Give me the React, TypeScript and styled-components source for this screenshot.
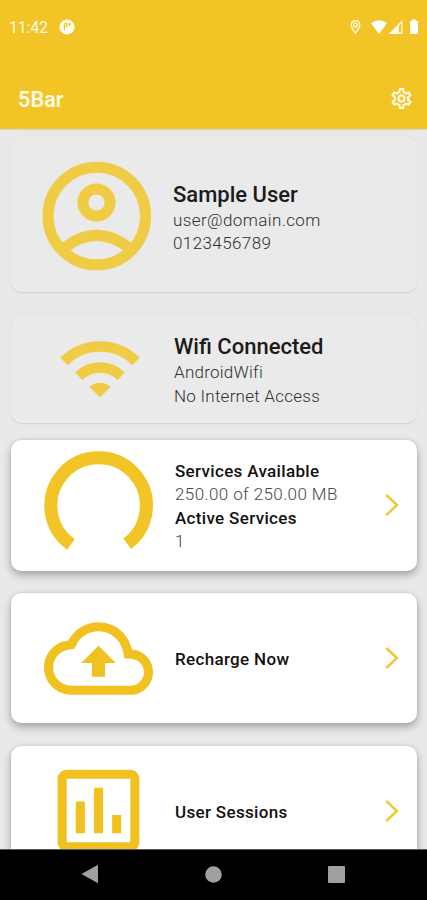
import React from "react";
import styled, { createGlobalStyle } from "styled-components";
import { MdOutlineSettings } from "react-icons/md";

const GlobalStyle = createGlobalStyle`
  *, *::before, *::after { box-sizing: border-box; }
  html, body { margin: 0; padding: 0; }
  body { font-family: Roboto, "Liberation Sans", sans-serif; overflow: hidden; }
  svg { display: block; }
`;

const YELLOW = "#f2c425";

const Screen = styled.div`
  display: flex;
  flex-direction: column;
  width: 427px;
  height: 900px;
  overflow: hidden;
  background: #e9e9e9;
`;

const Header = styled.header`
  flex: none;
  display: flex;
  flex-direction: column;
  height: 129px;
  background: ${YELLOW};
  color: #fffbe8;
  box-shadow: 0 0 2px rgba(80, 80, 60, 0.35);
  z-index: 1;
`;

const StatusBar = styled.div`
  display: flex;
  align-items: center;
  height: 54px;
  padding: 0 8px 0 9px;
`;

const Clock = styled.span`
  width: 50px;
  font-size: 16px;
  letter-spacing: -0.2px;
  line-height: 20px;
  padding-top: 2px;
`;

const StatusIcons = styled.div`
  margin-left: auto;
`;

const AppBar = styled.div`
  display: flex;
  align-items: center;
  justify-content: space-between;
  height: 75px;
  padding: 13px 13px 0 18px;
`;

const AppTitle = styled.h1`
  margin: 0;
  padding-top: 3px;
  font-size: 21.5px;
  line-height: 26px;
  font-weight: 600;
  letter-spacing: 0.1px;
`;

const Content = styled.main`
  flex: 1;
  min-height: 0;
  display: flex;
  flex-direction: column;
  padding: 7px 10.5px 0 11px;
  overflow: hidden;
`;

const Card = styled.section<{ $height: number; $gap?: number; $raised?: boolean; $inset?: number }>`
  flex: none;
  display: flex;
  align-items: center;
  height: ${(p) => p.$height}px;
  margin-bottom: ${(p) => p.$gap ?? 0}px;
  padding: 0 18px 0 ${(p) => p.$inset ?? 33}px;
  border-radius: 10px;
  background: ${(p) => (p.$raised ? "#fff" : "#eaeaea")};
  box-shadow: ${(p) =>
    p.$raised
      ? "0 4px 8px rgba(0,0,0,0.3), 0 0 3px rgba(0,0,0,0.1)"
      : "0 0.5px 1.5px rgba(0,0,0,0.1)"};
`;

const IconSlot = styled.div<{ $drop?: number; $trail?: number }>`
  flex: none;
  width: 110px;
  margin-right: ${(p) => p.$trail ?? 21}px;
  padding-top: ${(p) => p.$drop ?? 0}px;
`;

const Info = styled.div<{ $drop?: number }>`
  flex: 1;
  padding-top: ${(p) => p.$drop ?? 0}px;
  white-space: nowrap;
`;

const CardTitle = styled.h2`
  margin: 0;
  color: #1b1b1b;
  font-size: 22px;
  line-height: 28px;
  font-weight: 500;
`;

const Label = styled.div`
  color: #111;
  font-size: 17px;
  line-height: 23.4px;
  font-weight: 500;
  letter-spacing: 0.33px;
`;

const Value = styled.div<{ $tracking?: number; $dark?: boolean }>`
  color: ${(p) => (p.$dark ? "#303030" : "#484848")};
  font-size: 17px;
  line-height: 23.4px;
  font-weight: 300;
  letter-spacing: ${(p) => p.$tracking ?? 0.4}px;
`;

const NavBar = styled.nav`
  flex: none;
  display: flex;
  align-items: center;
  justify-content: space-between;
  height: 51px;
  padding: 0 82px 2px 81px;
  background: #000;
  border-top: 1px solid #555;
  z-index: 1;
`;

const AppBadge = () => (
  <svg width="16" height="16" viewBox="0 0 16 16">
    <circle cx="8" cy="8" r="7.6" fill="#fffdf2" />
    <path d="M5.4 11.200V5.800q0-1.400 1.400-1.400h.9v4.200" fill="none" stroke={YELLOW} strokeWidth="1.4" />
    <circle cx="10.600" cy="5.200" r="1.300" fill={YELLOW} />
  </svg>
);

const SystemGlyphs = () => (
  <svg width="70" height="16" viewBox="0 0 70 16">
    <path
      d="M6.5 14.2C4.1 11 2.2 8.500 2.200 5.900a4.300 4.300 0 0 1 8.600 0c0 2.600-1.900 5.100-4.300 8.300z"
      fill="none"
      stroke="#fffbe8"
      strokeWidth="1.4"
    />
    <circle cx="6.500" cy="5.900" r="1.800" fill="none" stroke="#fffbe8" strokeWidth="1.400" />
    <path d="M22 4.200Q30-1.600 38 4.200L30 15z" fill="#fff" />
    <path d="M39.500 15 53.500 1v14z" fill="#fffbe8" />
    <path d="M49.900 6.700 52.200 4.400v9.200h-2.300z" fill={YELLOW} />
    <path d="M63.200.5h3.600v1.300h1.200q1 0 1 1V14q0 1-1 1h-6q-1 0-1-1V2.800q0-1 1-1h1.200z" fill="#fff" />
  </svg>
);

const AvatarIcon = () => (
  <svg width="110" height="110" viewBox="0 0 110 110" fill="none" stroke="#f0cc45" strokeWidth="11">
    <circle cx="54.800" cy="55" r="48.800" />
    <circle cx="54.500" cy="41.500" r="13.600" />
    <path d="M22 87Q54.500 61.500 87.500 87" />
  </svg>
);

const WifiIcon = () => (
  <svg width="110" height="60" viewBox="0 0 110 60" fill="none" stroke="#f0cc45" strokeWidth="10.500">
    <path d="M20 22.500A50.800 50.800 0 0 1 92 22.500" />
    <path d="M34.800 37.300A30 30 0 0 1 77.200 37.300" />
    <path d="M56 58.500 45.500 48A15 15 0 0 1 66.500 48z" fill="#f0cc45" stroke="none" />
  </svg>
);

const UsageGauge = () => (
  <svg width="110" height="110" viewBox="0 0 110 110">
    <path d="M27 93.500A47.800 47.800 0 1 1 83.200 92.800" fill="none" stroke={YELLOW} strokeWidth="13" />
  </svg>
);

const CloudUploadIcon = () => (
  <svg width="109" height="109" viewBox="0 0 24 24" fill="#f1c21f">
    <path d="M19.350 10.040C18.670 6.590 15.640 4 12 4 9.110 4 6.600 5.640 5.350 8.040 2.340 8.360 0 10.910 0 14c0 3.310 2.690 6 6 6h13c2.760 0 5-2.240 5-5 0-2.640-2.050-4.780-4.650-4.960zM19 18H6c-2.210 0-4-1.790-4-4 0-2.050 1.530-3.760 3.560-3.970l1.070-.110.500-.950C8.080 7.140 9.940 6 12 6c2.620 0 4.880 1.860 5.390 4.430l.300 1.500 1.530.110c1.560.100 2.780 1.410 2.780 2.960 0 1.650-1.350 3-3 3zM8.200 13h2.350v3h2.900v-3h2.350L12 9.200z" />
  </svg>
);

const ChartBoxIcon = () => (
  <svg width="109" height="109" viewBox="0 0 24 24" fill="#f1c21f">
    <path d="M9 17H7v-7h2v7zm4 0h-2V7h2v10zm4 0h-2v-4h2v4zm2 2H5V5h14v14zm0-16H5c-1.100 0-2 .900-2 2v14c0 1.100.900 2 2 2h14c1.100 0 2-.900 2-2V5c0-1.100-.900-2-2-2z" />
  </svg>
);

const Chevron = () => (
  <svg width="14" height="24" viewBox="0 0 14 24">
    <path d="M1.300 2 12 12 1.300 22" fill="none" stroke="#f3c72f" strokeWidth="2.400" />
  </svg>
);

const BackGlyph = () => (
  <svg width="18" height="20" viewBox="0 0 18 20">
    <path d="M.500 10 17 .800v18.400z" fill="#a0a0a0" />
  </svg>
);

const HomeGlyph = () => (
  <svg width="17" height="17" viewBox="0 0 17 17">
    <circle cx="8.500" cy="8.500" r="8.300" fill="#a0a0a0" />
  </svg>
);

const RecentsGlyph = () => (
  <svg width="17" height="17" viewBox="0 0 17 17">
    <rect width="17" height="17" rx="1" fill="#a0a0a0" />
  </svg>
);

export default function App() {
  return (
    <>
      <GlobalStyle />
      <Screen>
        <Header>
          <StatusBar>
            <Clock>11:42</Clock>
            <AppBadge />
            <StatusIcons>
              <SystemGlyphs />
            </StatusIcons>
          </StatusBar>
          <AppBar>
            <AppTitle>5Bar</AppTitle>
            <MdOutlineSettings size={25} />
          </AppBar>
        </Header>
        <Content>
          <Card $height={156} $gap={23} $inset={31}>
            <IconSlot $drop={4}>
              <AvatarIcon />
            </IconSlot>
            <Info $drop={8}>
              <CardTitle>Sample User</CardTitle>
              <Value $dark>user@domain.com</Value>
              <Value $dark>0123456789</Value>
            </Info>
          </Card>
          <Card $height={108} $gap={17}>
            <IconSlot $trail={20}>
              <WifiIcon />
            </IconSlot>
            <Info $drop={3}>
              <CardTitle>Wifi Connected</CardTitle>
              <Value $dark $tracking={0.25}>AndroidWifi</Value>
              <Value $dark $tracking={0.25}>No Internet Access</Value>
            </Info>
          </Card>
          <Card $height={130.5} $gap={22.5} $raised>
            <IconSlot $drop={2}>
              <UsageGauge />
            </IconSlot>
            <Info $drop={3}>
              <Label>Services Available</Label>
              <Value>250.00 of 250.00 MB</Value>
              <Label>Active Services</Label>
              <Value>1</Value>
            </Info>
            <Chevron />
          </Card>
          <Card $height={130} $gap={22.5} $raised>
            <IconSlot>
              <CloudUploadIcon />
            </IconSlot>
            <Info $drop={3}>
              <Label>Recharge Now</Label>
            </Info>
            <Chevron />
          </Card>
          <Card $height={130.5} $raised>
            <IconSlot>
              <ChartBoxIcon />
            </IconSlot>
            <Info $drop={3}>
              <Label>User Sessions</Label>
            </Info>
            <Chevron />
          </Card>
        </Content>
        <NavBar>
          <BackGlyph />
          <HomeGlyph />
          <RecentsGlyph />
        </NavBar>
      </Screen>
    </>
  );
}
